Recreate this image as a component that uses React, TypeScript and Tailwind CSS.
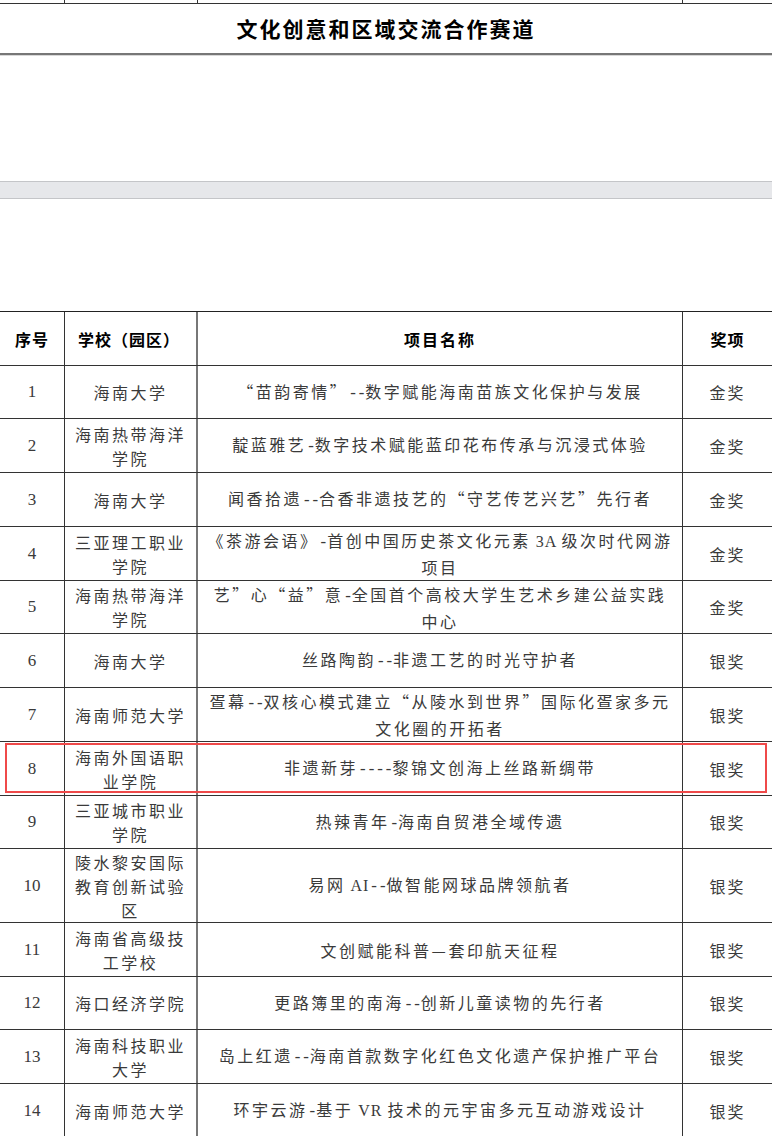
import React from "react";

type Row = {
  no: number;
  school: string[];
  project: string[];
  award: string;
  h: number;
};

const rows: Row[] = [
  { no: 1, school: ["海南大学"], project: ["“苗韵寄情”--数字赋能海南苗族文化保护与发展"], award: "金奖", h: 53 },
  { no: 2, school: ["海南热带海洋", "学院"], project: ["靛蓝雅艺-数字技术赋能蓝印花布传承与沉浸式体验"], award: "金奖", h: 54 },
  { no: 3, school: ["海南大学"], project: ["闻香拾遗--合香非遗技艺的“守艺传艺兴艺”先行者"], award: "金奖", h: 54 },
  { no: 4, school: ["三亚理工职业", "学院"], project: ["《茶游会语》-首创中国历史茶文化元素 3A 级次时代网游", "项目"], award: "金奖", h: 54 },
  { no: 5, school: ["海南热带海洋", "学院"], project: ["艺”心“益”意-全国首个高校大学生艺术乡建公益实践", "中心"], award: "金奖", h: 53 },
  { no: 6, school: ["海南大学"], project: ["丝路陶韵--非遗工艺的时光守护者"], award: "银奖", h: 54 },
  { no: 7, school: ["海南师范大学"], project: ["疍幕--双核心模式建立“从陵水到世界”国际化疍家多元", "文化圈的开拓者"], award: "银奖", h: 54 },
  { no: 8, school: ["海南外国语职", "业学院"], project: ["非遗新芽----黎锦文创海上丝路新绸带"], award: "银奖", h: 54 },
  { no: 9, school: ["三亚城市职业", "学院"], project: ["热辣青年-海南自贸港全域传遗"], award: "银奖", h: 53 },
  { no: 10, school: ["陵水黎安国际", "教育创新试验", "区"], project: ["易网 AI--做智能网球品牌领航者"], award: "银奖", h: 74 },
  { no: 11, school: ["海南省高级技", "工学校"], project: ["文创赋能科普—套印航天征程"], award: "银奖", h: 54 },
  { no: 12, school: ["海口经济学院"], project: ["更路簿里的南海--创新儿童读物的先行者"], award: "银奖", h: 53 },
  { no: 13, school: ["海南科技职业", "大学"], project: ["岛上红遗--海南首款数字化红色文化遗产保护推广平台"], award: "银奖", h: 54 },
  { no: 14, school: ["海南师范大学"], project: ["环宇云游-基于 VR 技术的元宇宙多元互动游戏设计"], award: "银奖", h: 54 },
];

function Mixed({ text }: { text: string }) {
  const parts = text.split(/(-+|[A-Za-z0-9 ]+)/);
  return (
    <>
      {parts.map((p, i) => {
        if (p === "") return null;
        if (/^-+$/.test(p))
          return (
            <span key={i} className="font-['Liberation_Mono',monospace] tracking-[-1px]">
              {p}
            </span>
          );
        if (/^[A-Za-z0-9 ]+$/.test(p))
          return (
            <span key={i} className="font-['Liberation_Serif',serif] tracking-[1px]">
              {p}
            </span>
          );
        return <span key={i}>{p}</span>;
      })}
    </>
  );
}

const grid = "grid grid-cols-[65px_133px_485px_89px]";

export default function App() {
  return (
    <div className="w-[772px] h-[1136px] overflow-hidden bg-white font-['Noto_Sans_CJK_SC',sans-serif] text-[#3a3a3a]">
      {/* top strip */}
      <div className={`${grid} h-[4px] border-b border-[#333]`}>
        <div className="border-r border-[#333]" />
        <div className="border-r border-[#333]" />
        <div className="border-r border-[#333]" />
        <div />
      </div>
      {/* title */}
      <div className="h-[51px] flex items-center justify-center border-b-2 border-[#777]">
        <span className="text-[21px] font-bold tracking-[2px] text-black leading-none">
          文化创意和区域交流合作赛道
        </span>
      </div>
      <div className="h-[1px] bg-[#d8d8d8]" />
      {/* spacer */}
      <div className="h-[125px]" />
      {/* gray bar */}
      <div className="h-[18px] bg-[#e6e7ea] border-y border-[#c4c5c8]" />
      {/* spacer */}
      <div className="h-[112px]" />
      {/* table */}
      <div className="border-t border-[#222]">
        <div className={`${grid} h-[54px] border-b border-[#333] text-[16px] font-bold text-black`}>
          <div className="border-r border-[#333] flex items-center justify-center tracking-[1px]">序号</div>
          <div className="border-r-2 border-[#777] flex items-center pl-[13px] tracking-[1px]">学校（园区）</div>
          <div className="border-r border-[#333] flex items-center justify-center tracking-[2px]">项目名称</div>
          <div className="flex items-center justify-center tracking-[1px]">奖项</div>
        </div>
        {rows.map((r) => (
          <div
            key={r.no}
            className={`${grid} relative border-b border-[#333] text-[16px] leading-[24px]`}
            style={{ height: r.h }}
          >
            <div className="border-r border-[#333] flex items-center justify-center font-['Liberation_Serif',serif] text-[17px]">
              {r.no}
            </div>
            <div className="border-r-2 border-[#777] flex flex-col items-center justify-center tracking-[2.5px] text-center">
              {r.school.map((s, i) => (
                <span key={i} className="whitespace-nowrap">{s}</span>
              ))}
            </div>
            <div className="border-r border-[#333] flex flex-col items-center justify-center tracking-[2.5px] text-center">
              {r.project.map((s, i) => (
                <span key={i} className="whitespace-nowrap">
                  <Mixed text={s} />
                </span>
              ))}
            </div>
            <div className="flex items-center justify-center tracking-[2px]">{r.award}</div>
            {r.no === 8 && (
              <div className="absolute left-[5px] right-[5px] top-[1px] bottom-[2px] border-2 border-[#ef4a4a] pointer-events-none" />
            )}
          </div>
        ))}
      </div>
    </div>
  );
}
